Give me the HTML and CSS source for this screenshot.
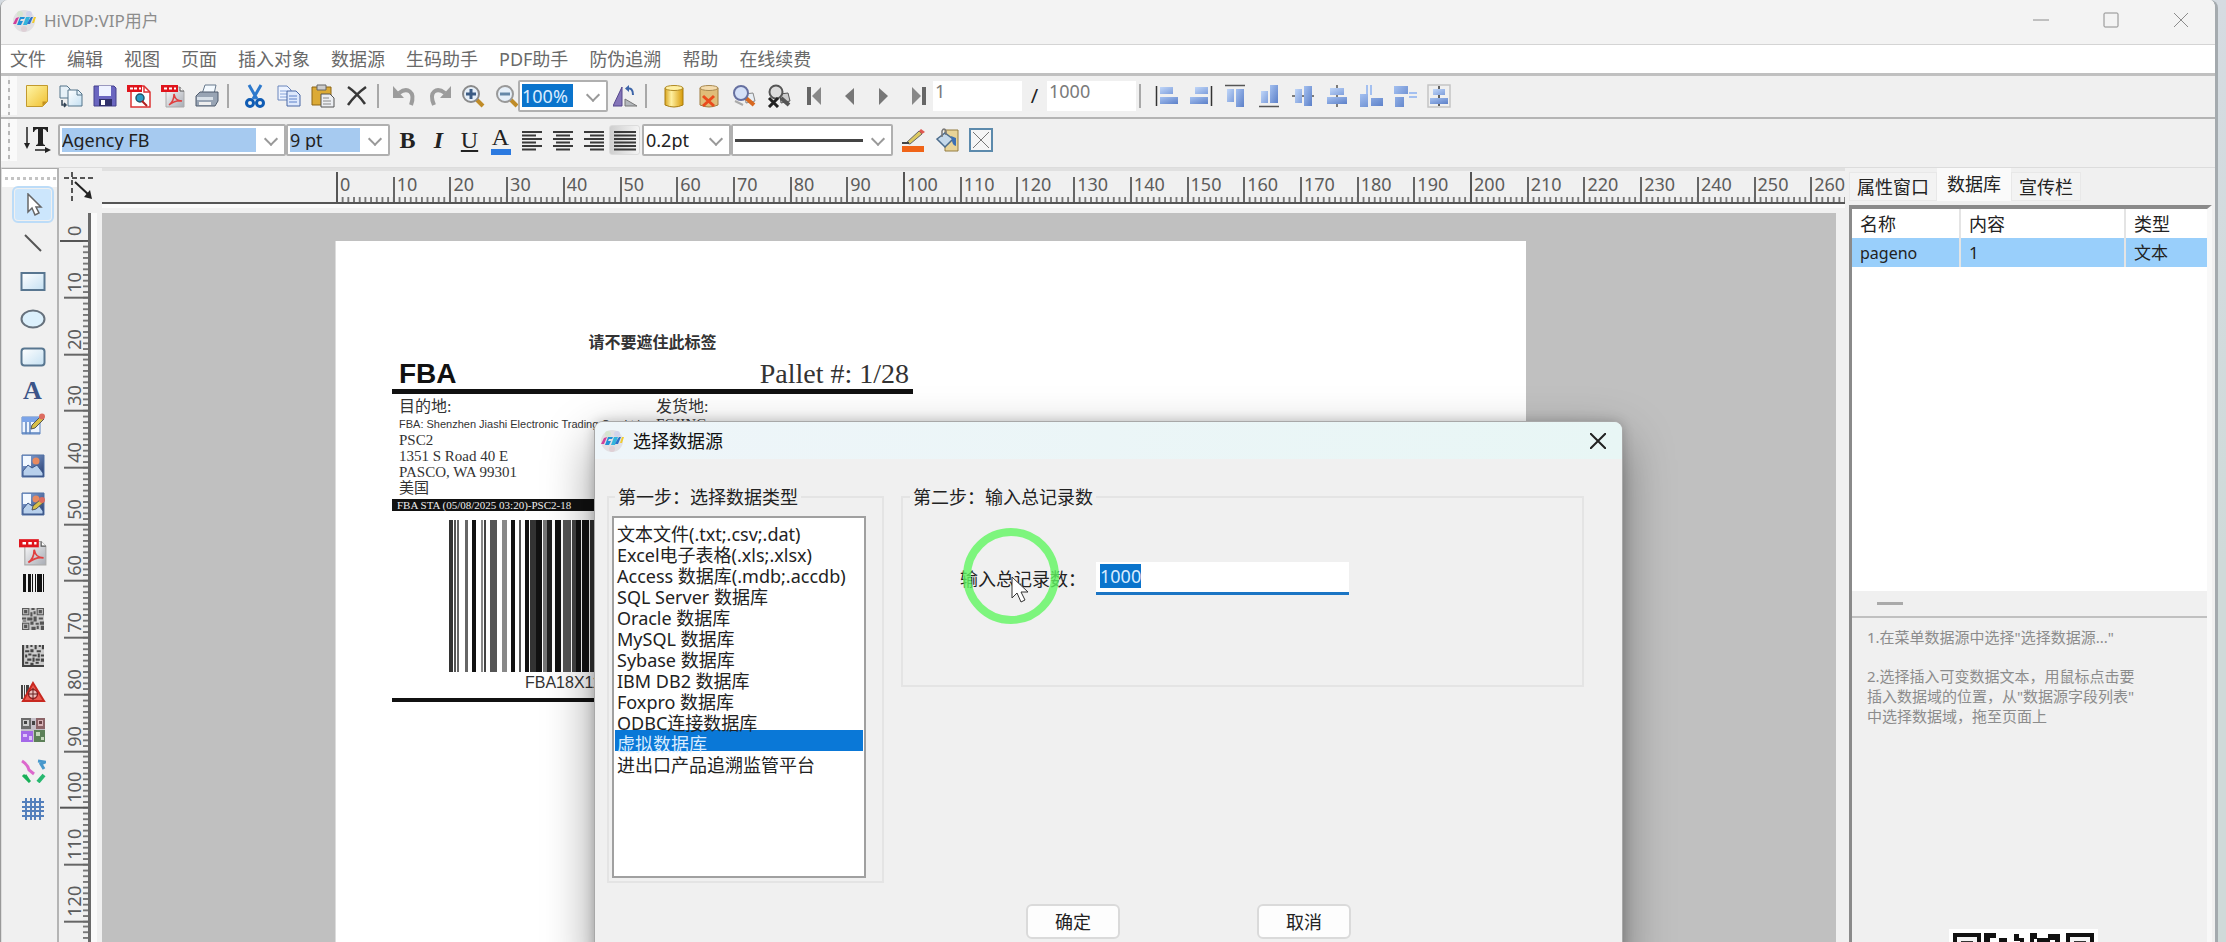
FILE: index.html
```
<!DOCTYPE html>
<html lang="zh-CN">
<head>
    <meta charset="UTF-8">
    <meta name="viewport" content="width=device-width, initial-scale=1.0">
    <title>HiVDP:VIP用户</title>
    <link rel="stylesheet" href="styles.css">
</head>
<body>
    <svg class="defs" aria-hidden="true">
        <defs>
            <linearGradient id="g-yellow" x1="0" y1="0" x2="1" y2="1"><stop offset="0" stop-color="#fff6a8"/><stop offset="1" stop-color="#f0c030"/></linearGradient>
            <linearGradient id="g-gold"><stop offset="0" stop-color="#d9a520"/><stop offset=".35" stop-color="#fff0a0"/><stop offset="1" stop-color="#d79a08"/></linearGradient>
            <linearGradient id="g-blue" x1="0" y1="0" x2="1" y2="1"><stop offset="0" stop-color="#c0d6f8"/><stop offset="1" stop-color="#7f9fdc"/></linearGradient>
            <linearGradient id="g-deep" x1="0" y1="0" x2="1" y2="1"><stop offset="0" stop-color="#a4c0f0"/><stop offset="1" stop-color="#5c80c8"/></linearGradient>
            <linearGradient id="g-sky" x1="0" y1="0" x2="1" y2="1"><stop offset="0" stop-color="#ffffff"/><stop offset="1" stop-color="#c4e0f2"/></linearGradient>
            <linearGradient id="g-navy" x1="0" y1="0" x2="1" y2="1"><stop offset="0" stop-color="#8fb0e4"/><stop offset="1" stop-color="#25396b"/></linearGradient>
            <linearGradient id="g-grey" x1="0" y1="0" x2="1" y2="1"><stop offset="0" stop-color="#fdfdfd"/><stop offset="1" stop-color="#a8acb4"/></linearGradient>
        </defs>
        <symbol id="i-logo" viewBox="0 0 24 24">
            <circle cx="12" cy="12" r="11" fill="#e2e0e3"/><circle cx="8" cy="5" r="3" fill="#d6e4d0"/><circle cx="17" cy="5" r="3" fill="#d4d4ea"/><circle cx="12" cy="20" r="3" fill="#dfd0d6"/>
            <path d="M1 15l3-6 3-1-3 7z" fill="#d0409a"/><path d="M5 16l3-8h5l-1 2H9l-1 2h3l-2 4z" fill="#2090d8"/><path d="M11 16l3-8h4l-3 8z" fill="#35b4dc"/><path d="M15 15l2-4 2-3h2l-3 7z" fill="#2d70c8"/><path d="M20 14l2-6h2l-2 6z" fill="#f0cc30"/>
        </symbol>
        <symbol id="i-note" viewBox="0 0 24 24"><path d="M1.500 1.500h21v16l-5 5h-16z" fill="url(#g-yellow)" stroke="#c29a2e"/><path d="M22 17.500h-4.500V22z" fill="#c29020"/></symbol>
        <symbol id="i-docs" viewBox="0 0 24 24"><path d="M1 2h7l3 3v9H1z" fill="#e6f0f7" stroke="#54748a"/><path d="M9 6h10l4 4v12H9z" fill="url(#g-sky)" stroke="#54748a"/><path d="M18 6v5h5" fill="none" stroke="#54748a"/><path d="M3 16v5h4M5 19l2 2-2 2" fill="none" stroke="#345" stroke-width="1.500"/></symbol>
        <symbol id="i-save" viewBox="0 0 24 24"><path d="M1 2h20l2 2v18H1z" fill="#6a66c0" stroke="#44408c"/><path d="M6 2h12v10H6z" fill="#eef2ff"/><path d="M6 15h13v7H6z" fill="#30306a"/><path d="M8 16h4v5H8z" fill="#fff"/></symbol>
        <symbol id="i-pdf" viewBox="0 0 24 24"><path d="M5 3h14l4 4v16H5z" fill="url(#g-grey)" stroke="#aaa"/><path d="M19 3v4h4" fill="#fff" stroke="#555"/><path d="M0 1h17v7H0z" fill="#e0141c"/><path d="M3 4.500h3M8 4.500h3M13 4.500h2" stroke="#fff" stroke-width="2"/><path d="M8 21c4-3 5-7 5-11 1 5 3 7 8 7-5-1-9 1-13 4z" fill="none" stroke="#e04040" stroke-width="1.500"/></symbol>
        <symbol id="i-pdfsearch" viewBox="0 0 24 24"><path d="M4 2h13l6 6v15H4z" fill="#fff" stroke="#d33" stroke-width="1.500"/><path d="M17 2v6h6" fill="none" stroke="#d33" stroke-width="1.500"/><path d="M0 1h15v7H0z" fill="#e0141c"/><path d="M3 4.500h3M7 4.500h3M12 4.500h2" stroke="#fff" stroke-width="2"/><circle cx="13" cy="14" r="4" fill="#2b9dc4" stroke="#24566a" stroke-width="1.500"/><path d="M15 17l5 5" stroke="#b02020" stroke-width="2"/></symbol>
        <symbol id="i-print" viewBox="0 0 24 24"><path d="M7 10L10 1h11l-2 9z" fill="#f4faff" stroke="#66788c"/><path d="M1 12l4-4h18v9l-3 5H1z" fill="#98a4b4" stroke="#4f5b6d"/><path d="M2 13h16v3H2z" fill="#d8e0e8"/><path d="M4 18h12v3H4z" fill="#eee"/></symbol>
        <symbol id="i-cut" viewBox="0 0 24 24"><path d="M6 1l8 14M18 1l-8 14" stroke="#2d79cc" stroke-width="3"/><circle cx="7" cy="19" r="3.500" fill="none" stroke="#0f5cb4" stroke-width="3"/><circle cx="17" cy="19" r="3.500" fill="none" stroke="#0f5cb4" stroke-width="3"/></symbol>
        <symbol id="i-copy" viewBox="0 0 24 24"><path d="M1 2h9l4 4v10H1z" fill="#edf3ff" stroke="#6a86bc"/><path d="M3 7h7M3 10h7M3 13h7" stroke="#86a4da"/><path d="M10 7h9l4 4v11H10z" fill="#dde8fc" stroke="#4866a4"/><path d="M12 12h8M12 15h8M12 18h8" stroke="#5c80c8"/></symbol>
        <symbol id="i-paste" viewBox="0 0 24 24"><path d="M1 3h19v18H1z" fill="#dcaa35" stroke="#8c6414"/><path d="M6 1h9v5H6z" fill="#ccc" stroke="#666"/><path d="M10 10h9l4 4v9H10z" fill="#eceef2" stroke="#555"/><path d="M12 14h6M12 17h8M12 20h8" stroke="#888"/></symbol>
        <symbol id="i-delete" viewBox="0 0 24 24"><path d="M3 3c6 4 12 10 17 17M21 3C14 8 8 14 3 21" fill="none" stroke="#383838" stroke-width="2.500"/></symbol>
        <symbol id="i-undo" viewBox="0 0 24 24"><path d="M6 9c8-6 17-2 12 12" fill="none" stroke="#9c9c9c" stroke-width="4"/><path d="M0 2v12h11z" fill="#9c9c9c"/></symbol>
        <symbol id="i-redo" viewBox="0 0 24 24"><path d="M18 9C10 3 1 7 7 21" fill="none" stroke="#9c9c9c" stroke-width="4"/><path d="M24 2v12H13z" fill="#9c9c9c"/></symbol>
        <symbol id="i-zoomin" viewBox="0 0 24 24"><path d="M15 15l7 7" stroke="#c08c28" stroke-width="4"/><circle cx="10" cy="10" r="8" fill="#e6eff8" stroke="#8a8a8a" stroke-width="2"/><path d="M10 5v10M5 10h10" stroke="#3c5c84" stroke-width="3"/></symbol>
        <symbol id="i-zoomout" viewBox="0 0 24 24"><path d="M15 15l7 7" stroke="#c08c28" stroke-width="4"/><circle cx="10" cy="10" r="8" fill="#e6eff8" stroke="#999" stroke-width="2"/><path d="M5 10h10" stroke="#6688a8" stroke-width="3"/></symbol>
        <symbol id="i-flip" viewBox="0 0 24 24"><path d="M9 3v19H0z" fill="#8474b8" stroke="#55468c"/><path d="M12 15l12 7H12z" fill="#b4b8bc" stroke="#777"/><path d="M14 5q6-2 6 6" fill="none" stroke="#3c64a8" stroke-width="2"/><path d="M16 1v7l-4-3.500z" fill="#3c64a8"/></symbol>
        <symbol id="i-db" viewBox="0 0 24 24"><path d="M3 4v17q9 4 18 0V4z" fill="url(#g-gold)" stroke="#a87c10"/><ellipse cx="12" cy="4" rx="9" ry="2.500" fill="#fff0a4" stroke="#b08a24"/></symbol>
        <symbol id="i-dbdel" viewBox="0 0 24 24"><path d="M3 4v17q9 4 18 0V4z" fill="#e0bc78" stroke="#a07c40"/><ellipse cx="12" cy="4" rx="9" ry="2.500" fill="#f4dcae" stroke="#a88850"/><path d="M6 12l11 10M17 12L6 22" stroke="#ea4a1c" stroke-width="3"/></symbol>
        <symbol id="i-find" viewBox="0 0 24 24"><path d="M13 10l8-1 2 8-9 2z" fill="#e8eef4" stroke="#888"/><path d="M14 14l8 7" stroke="#d86820" stroke-width="4"/><circle cx="9" cy="9" r="7" fill="#d4e0f8" stroke="#6670a0" stroke-width="2"/><path d="M3 17l8 4" stroke="#aaa" stroke-width="2"/></symbol>
        <symbol id="i-findx" viewBox="0 0 24 24"><path d="M13 10l8-1 2 8-9 2z" fill="#ccc" stroke="#555"/><path d="M14 14l8 7" stroke="#555" stroke-width="4"/><circle cx="9" cy="8" r="6.500" fill="#ddd" stroke="#555" stroke-width="2"/><path d="M2 14l9 9M11 14l-9 9" stroke="#222" stroke-width="3"/></symbol>
        <symbol id="i-first" viewBox="0 0 24 24"><path d="M5 3h4v18H5z" fill="#666"/><path d="M19 3v18l-9-9z" fill="#888"/></symbol>
        <symbol id="i-prev" viewBox="0 0 24 24"><path d="M17 4v17l-9-9z" fill="#777"/></symbol>
        <symbol id="i-next" viewBox="0 0 24 24"><path d="M7 4v17l9-9z" fill="#777"/></symbol>
        <symbol id="i-last" viewBox="0 0 24 24"><path d="M15 3h4v18h-4z" fill="#666"/><path d="M5 3v18l9-9z" fill="#888"/></symbol>
        <symbol id="i-alignl" viewBox="0 0 24 24"><path d="M1.500 2v20" stroke="#333" stroke-width="1.500"/><path d="M5 3h13v7H5z" fill="url(#g-blue)"/><path d="M5 13h18v7H5z" fill="url(#g-deep)"/></symbol>
        <symbol id="i-alignr" viewBox="0 0 24 24"><path d="M22.500 2v20" stroke="#333" stroke-width="1.500"/><path d="M6 3h13v7H6z" fill="url(#g-blue)"/><path d="M1 13h18v7H1z" fill="url(#g-deep)"/></symbol>
        <symbol id="i-alignt" viewBox="0 0 24 24"><path d="M2 1.500h20" stroke="#555" stroke-width="1.500"/><path d="M4 5h7v13H4z" fill="url(#g-blue)"/><path d="M13 5h8v18h-8z" fill="url(#g-deep)"/></symbol>
        <symbol id="i-alignb" viewBox="0 0 24 24"><path d="M2 22.500h20" stroke="#555" stroke-width="1.500"/><path d="M4 7h7v12H4z" fill="url(#g-blue)"/><path d="M13 1h8v18h-8z" fill="url(#g-deep)"/></symbol>
        <symbol id="i-alignm" viewBox="0 0 24 24"><path d="M1 12h22" stroke="#555" stroke-width="1.500"/><path d="M4 5h7v14H4z" fill="url(#g-blue)"/><path d="M13 2h8v20h-8z" fill="url(#g-deep)"/></symbol>
        <symbol id="i-alignc" viewBox="0 0 24 24"><path d="M12 1v22" stroke="#555" stroke-width="1.500"/><path d="M5 4h14v7H5z" fill="url(#g-blue)"/><path d="M2 13h20v7H2z" fill="url(#g-deep)"/></symbol>
        <symbol id="i-samew" viewBox="0 0 24 24"><path d="M7 1h2v10H7zM11 1h2v10h-2z" fill="#a4c0f0"/><path d="M1 10h8v13H1zM12 14h12v8H12z" fill="url(#g-deep)"/></symbol>
        <symbol id="i-sameh" viewBox="0 0 24 24"><path d="M16 8h8v2h-8zM16 12h8v2h-8z" fill="#a4c0f0"/><path d="M1 2h14v8H1zM2 13h9v10H2z" fill="url(#g-deep)"/></symbol>
        <symbol id="i-center" viewBox="0 0 24 24"><path d="M1 1h22v22H1z" fill="#f0f0f0" stroke="#c4c4c4" stroke-width="1.500"/><path d="M12 2v20" stroke="#333" stroke-width="1.500"/><path d="M6 5h12v6H6z" fill="url(#g-blue)"/><path d="M3 14h18v6H3z" fill="url(#g-deep)"/></symbol>
        <symbol id="i-textdir" viewBox="0 0 28 28"><path d="M4 1v18" stroke="#222" stroke-width="1.500"/><path d="M1 17h6l-3 6z" fill="#222"/><path d="M10 1h15v5h-1q-1-3-4-3v14q0 2 2 2v1h-9v-1q2 0 2-2V3q-3 0-4 3h-1z" fill="#222"/><path d="M12 24h12" stroke="#222" stroke-width="1.500"/><path d="M22 21v6l6-3z" fill="#222"/></symbol>
        <symbol id="i-left" viewBox="0 0 24 24"><path d="M2 4h20M2 7.500h14M2 11h20M2 14.500h14M2 18h20M2 21.500h14" stroke="#3a3a3a" stroke-width="2"/></symbol>
        <symbol id="i-mid" viewBox="0 0 24 24"><path d="M2 4h20M5 7.500h14M2 11h20M5 14.500h14M2 18h20M5 21.500h14" stroke="#3a3a3a" stroke-width="2"/></symbol>
        <symbol id="i-right" viewBox="0 0 24 24"><path d="M2 4h20M8 7.500h14M2 11h20M8 14.500h14M2 18h20M8 21.500h14" stroke="#3a3a3a" stroke-width="2"/></symbol>
        <symbol id="i-full" viewBox="0 0 24 24"><path d="M1 4h22M1 7.500h22M1 11h22M1 14.500h22M1 18h22M1 21.500h22" stroke="#3a3a3a" stroke-width="2"/></symbol>
        <symbol id="i-pen" viewBox="0 0 24 24"><path d="M5 15L18 3l3 3L9 16z" fill="#dcc860" stroke="#666"/><path d="M18 3l2-2 4 3-3 2z" fill="#e05850"/><path d="M1 15h7" stroke="#444" stroke-width="2"/><path d="M1 18h22v6H1z" fill="#f06418"/></symbol>
        <symbol id="i-bucket" viewBox="0 0 24 24"><path d="M10 2h13v21H10z" fill="#e8d498" stroke="#947c40"/><path d="M2 11l8-6 8 6-8 8z" fill="#c4d8ea" stroke="#4c6c8c" stroke-width="1.500"/><path d="M7 9V3q2-4 4 0v4" fill="none" stroke="#777" stroke-width="1.500"/><path d="M16 8l5 2v8q-4-1-4-6z" fill="#3c70b4"/></symbol>
        <symbol id="i-boxx" viewBox="0 0 24 24"><path d="M1 1h22v22H1z" fill="#f5f5f5" stroke="#5c8aac" stroke-width="2"/><path d="M4 4l16 16M20 4L4 20" stroke="#777"/></symbol>
        <symbol id="i-arrow" viewBox="0 0 24 24"><path d="M7 1v18l4-4 3 7 4-2-3-6h5z" fill="#fff" stroke="#666" stroke-width="1.500"/></symbol>
        <symbol id="i-line" viewBox="0 0 24 24"><path d="M4 4l16 16" stroke="#555" stroke-width="2"/></symbol>
        <symbol id="i-rect" viewBox="0 0 26 24"><path d="M1.500 4h23v17h-23z" fill="url(#g-sky)" stroke="#587690" stroke-width="2"/></symbol>
        <symbol id="i-ellipse" viewBox="0 0 26 24"><ellipse cx="13" cy="12" rx="11.500" ry="8.500" fill="#dcf0fc" stroke="#66717c" stroke-width="2"/></symbol>
        <symbol id="i-rrect" viewBox="0 0 26 24"><rect x="1.500" y="3.500" width="23" height="17" rx="3" fill="url(#g-sky)" stroke="#587690" stroke-width="2"/></symbol>
        <symbol id="i-tableedit" viewBox="0 0 24 24"><path d="M1 4h18v17H1z" fill="#eef5ff" stroke="#5c84c0"/><path d="M1 4h18v5H1z" fill="#7ba4e8"/><path d="M5 9v12M9 9v12M1 20h18" stroke="#5c84c0" stroke-width="1.500"/><path d="M10 16l1-4 9-9 3 3-9 9z" fill="#d8c048" stroke="#555"/><circle cx="21" cy="3.500" r="3" fill="#dc6c60"/></symbol>
        <symbol id="i-picture" viewBox="0 0 24 24"><path d="M1 1h22v22H1z" fill="url(#g-navy)" stroke="#5070a4"/><path d="M2 2h8v10H2z" fill="#f2f8ff"/><path d="M2 17l5-6 4 3 5-3 6 8v3H2z" fill="#b8d0ec" stroke="#3c588c"/><circle cx="15" cy="7" r="3.500" fill="#e88a60"/></symbol>
        <symbol id="i-barcode" viewBox="0 0 24 24"><path d="M2 3h3v18H2zM7 3h3v18H7zM11 3h1v18h-1zM14 3h1v18h-1zM16 3h5v18h-5zM22 3h1v18h-1z" fill="#111"/></symbol>
        <symbol id="i-qr" viewBox="0 0 21 21"><path d="M0 0h21v21H0z" fill="#c8c8c8"/><path d="M0 0h7v7H0zM14 0h7v7h-7zM0 14h7v7H0z" fill="#5a5a5a"/><path d="M1 1h5v5H1zM15 1h5v5h-5zM1 15h5v5H1z" fill="#bbb"/><path d="M2 2h3v3H2zM16 2h3v3h-3zM2 16h3v3H2zM9 0h3v2H9zM8 4h2v4H8zM11 3h2v3h-2zM0 9h4v2H0zM5 9h5v3H5zM11 8h3v5h-3zM16 9h4v2h-4zM1 12h3v1H1zM8 13h3v3H8zM13 14h3v2h-3zM17 13h4v3h-4zM9 18h4v3H9zM14 17h2v3h-2zM18 17h3v4h-3z" fill="#555"/></symbol>
        <symbol id="i-dm" viewBox="0 0 21 21"><path d="M0 0h21v21H0z" fill="#ccc"/><path d="M0 0h2v21H0zM2 19h19v2H2zM4 0h2v3H4zM8 0h2v2H8zM12 0h2v4h-2zM16 0h2v2h-2zM19 0h2v4h-2zM3 5h4v2H3zM8 4h3v3H8zM14 5h4v2h-4zM3 9h2v3H3zM6 8h3v2H6zM10 9h4v2h-4zM15 8h2v4h-2zM18 9h3v2h-3zM5 13h4v2H5zM10 12h2v4h-2zM13 13h4v2h-4zM18 13h3v3h-3zM3 16h3v2H3zM8 17h3v2H8zM13 16h3v2h-3z" fill="#444"/></symbol>
        <symbol id="i-trace" viewBox="0 0 26 24"><path d="M1 4h2v14H1zM4 4h1v14H4zM6 4h3v12H6z" fill="#444"/><path d="M13 2l11 18H3z" fill="#e85a50" stroke="#c82820" stroke-width="2"/><circle cx="13" cy="13" r="4.500" fill="#eac0bc" stroke="#922" stroke-width="1.500"/><path d="M13 7v12M8 13h10" stroke="#622"/></symbol>
        <symbol id="i-qrcolor" viewBox="0 0 24 24"><path d="M0 0h24v24H0z" fill="#c4c0c8"/><path d="M0 0h10v11H0z" fill="#6c6c6c"/><path d="M2 2h6v6H2z" fill="#ccc"/><path d="M3 3h3v3H3zM11 3h3v4h-3z" fill="#444"/><path d="M15 0h9v11h-9z" fill="#8c6468"/><path d="M17 2h5v6h-5z" fill="#d8b4b8"/><path d="M18 3h3v3h-3z" fill="#6c4448"/><path d="M0 13h12v11H0z" fill="#a468e8"/><path d="M2 16h4v3H2zM8 18h3v4H8z" fill="#ddc4fa"/><path d="M13 12h11v12H13z" fill="#5c8058"/><path d="M15 14h4v4h-4zM20 19h3v3h-3z" fill="#c4d8bc"/></symbol>
        <symbol id="i-marks" viewBox="0 0 26 24"><path d="M2 2q6 4 7 9l5 4" fill="none" stroke="#dc68cc" stroke-width="3"/><path d="M18 2l7 1-4 2 3 5" fill="none" stroke="#4898cc" stroke-width="3"/><path d="M3 16l7 7M5 16l4 6" stroke="#18b058" stroke-width="3"/><path d="M24 16l-6 7" stroke="#28b870" stroke-width="4"/></symbol>
        <symbol id="i-grid" viewBox="0 0 24 24"><path d="M5 1v22M10 1v22M14 1v22M19 1v22M1 5h22M1 10h22M1 14h22M1 19h22" stroke="#5480bc" stroke-width="2"/></symbol>
        <symbol id="i-origin" viewBox="0 0 32 32"><path d="M0 7h32M8 1v31" stroke="#222" stroke-width="1.500" stroke-dasharray="5 3"/><path d="M11 11l15 14" stroke="#222" stroke-width="2"/><path d="M28 28l-8-2 6-7z" fill="#222"/></symbol>
    </svg>

    <div class="window">
        <header class="titlebar">
            <svg class="logo"><use href="#i-logo"/></svg>
            <h1>HiVDP:VIP用户</h1>
            <div class="window-buttons">
                <button aria-label="最小化"><svg viewBox="0 0 16 16"><path d="M0 8h16"/></svg></button>
                <button aria-label="最大化"><svg viewBox="0 0 16 16"><rect x="1" y="1" width="14" height="14" rx="1"/></svg></button>
                <button aria-label="关闭"><svg viewBox="0 0 16 16"><path d="M1 1l14 14M15 1L1 15"/></svg></button>
            </div>
        </header>

        <nav class="menubar">
            <button>文件</button><button>编辑</button><button>视图</button><button>页面</button><button>插入对象</button><button>数据源</button><button>生码助手</button><button>PDF助手</button><button>防伪追溯</button><button>帮助</button><button>在线续费</button>
        </nav>

        <div class="toolbar toolbar-main">
            <span class="grip"></span>
            <div class="group">
                <button aria-label="新建"><svg><use href="#i-note"/></svg></button>
                <button aria-label="打开"><svg><use href="#i-docs"/></svg></button>
                <button aria-label="保存"><svg><use href="#i-save"/></svg></button>
                <button aria-label="预览PDF"><svg><use href="#i-pdfsearch"/></svg></button>
                <button aria-label="导出PDF"><svg><use href="#i-pdf"/></svg></button>
                <button aria-label="打印"><svg><use href="#i-print"/></svg></button>
            </div>
            <span class="sep"></span>
            <div class="group">
                <button aria-label="剪切"><svg><use href="#i-cut"/></svg></button>
                <button aria-label="复制"><svg><use href="#i-copy"/></svg></button>
                <button aria-label="粘贴"><svg><use href="#i-paste"/></svg></button>
                <button aria-label="删除"><svg><use href="#i-delete"/></svg></button>
            </div>
            <span class="sep"></span>
            <div class="group group-zoom">
                <button aria-label="撤销"><svg><use href="#i-undo"/></svg></button>
                <button aria-label="重做"><svg><use href="#i-redo"/></svg></button>
                <button aria-label="放大"><svg><use href="#i-zoomin"/></svg></button>
                <button aria-label="缩小"><svg><use href="#i-zoomout"/></svg></button>
            </div>
            <span class="combo combo-zoom"><select aria-label="缩放"><option>100%</option></select></span>
            <div class="group">
                <button aria-label="翻转"><svg><use href="#i-flip"/></svg></button>
            </div>
            <span class="sep"></span>
            <div class="group group-wide">
                <button aria-label="选择数据源"><svg><use href="#i-db"/></svg></button>
                <button aria-label="移除数据源"><svg><use href="#i-dbdel"/></svg></button>
                <button aria-label="查看数据"><svg><use href="#i-find"/></svg></button>
                <button aria-label="取消查看"><svg><use href="#i-findx"/></svg></button>
                <button aria-label="第一条"><svg><use href="#i-first"/></svg></button>
                <button aria-label="上一条"><svg><use href="#i-prev"/></svg></button>
                <button aria-label="下一条"><svg><use href="#i-next"/></svg></button>
                <button aria-label="最后一条"><svg><use href="#i-last"/></svg></button>
            </div>
            <input class="record" aria-label="当前记录" value="1">
            <span class="slash">/</span>
            <input class="record" aria-label="总记录" value="1000">
            <span class="sep"></span>
            <div class="group">
                <button aria-label="左对齐"><svg><use href="#i-alignl"/></svg></button>
                <button aria-label="右对齐"><svg><use href="#i-alignr"/></svg></button>
                <button aria-label="顶对齐"><svg><use href="#i-alignt"/></svg></button>
                <button aria-label="底对齐"><svg><use href="#i-alignb"/></svg></button>
                <button aria-label="垂直居中"><svg><use href="#i-alignm"/></svg></button>
                <button aria-label="水平居中"><svg><use href="#i-alignc"/></svg></button>
                <button aria-label="等宽"><svg><use href="#i-samew"/></svg></button>
                <button aria-label="等高"><svg><use href="#i-sameh"/></svg></button>
                <button aria-label="页面居中"><svg><use href="#i-center"/></svg></button>
            </div>
        </div>

        <div class="toolbar toolbar-format">
            <span class="grip"></span>
            <button class="textdir" aria-label="文字方向"><svg><use href="#i-textdir"/></svg></button>
            <span class="combo combo-font"><select aria-label="字体"><option>Agency FB</option></select></span>
            <span class="combo combo-size"><select aria-label="字号"><option>9 pt</option></select></span>
            <div class="group group-format">
                <button class="letter bold">B</button>
                <button class="letter italic">I</button>
                <button class="letter underline">U</button>
                <button class="letter color">A</button>
                <button aria-label="居左"><svg><use href="#i-left"/></svg></button>
                <button aria-label="居中"><svg><use href="#i-mid"/></svg></button>
                <button aria-label="居右"><svg><use href="#i-right"/></svg></button>
                <button class="pressed" aria-label="两端对齐"><svg><use href="#i-full"/></svg></button>
            </div>
            <span class="combo combo-pt"><select aria-label="线宽"><option>0.2pt</option></select></span>
            <span class="combo combo-line"><select aria-label="线型"><option></option></select></span>
            <div class="group group-fill">
                <button aria-label="线条颜色"><svg><use href="#i-pen"/></svg></button>
                <button aria-label="填充颜色"><svg><use href="#i-bucket"/></svg></button>
                <button aria-label="无填充"><svg><use href="#i-boxx"/></svg></button>
            </div>
        </div>

        <main class="main">
            <aside class="tools">
                <span class="tools-grip"></span>
                <div class="tools-group shapes">
                    <button class="active" aria-label="选择"><svg><use href="#i-arrow"/></svg></button>
                    <button aria-label="直线"><svg><use href="#i-line"/></svg></button>
                    <button aria-label="矩形"><svg><use href="#i-rect"/></svg></button>
                    <button aria-label="椭圆"><svg><use href="#i-ellipse"/></svg></button>
                    <button aria-label="圆角矩形"><svg><use href="#i-rrect"/></svg></button>
                </div>
                <div class="tools-group texts">
                    <button class="tool-text">A</button>
                    <button aria-label="可变文本"><svg><use href="#i-tableedit"/></svg></button>
                </div>
                <div class="tools-group pictures">
                    <button aria-label="图片"><svg><use href="#i-picture"/></svg></button>
                    <button aria-label="可变图片"><svg viewBox="0 0 24 24"><use href="#i-picture"/><path d="M11 18l1-4 8-7 3 3-8 7z" fill="#d8c048" stroke="#555"/><circle cx="21" cy="8" r="3" fill="#dc6c60"/></svg></button>
                </div>
                <div class="tools-group files">
                    <button aria-label="PDF"><svg class="big"><use href="#i-pdf"/></svg></button>
                    <button aria-label="条形码"><svg><use href="#i-barcode"/></svg></button>
                </div>
                <div class="tools-group codes">
                    <button aria-label="二维码"><svg class="small"><use href="#i-qr"/></svg></button>
                    <button aria-label="DM码"><svg class="small"><use href="#i-dm"/></svg></button>
                    <button aria-label="溯源码"><svg><use href="#i-trace"/></svg></button>
                    <button aria-label="彩色码"><svg><use href="#i-qrcolor"/></svg></button>
                </div>
                <div class="tools-group marks">
                    <button aria-label="标记"><svg><use href="#i-marks"/></svg></button>
                    <button aria-label="网格"><svg><use href="#i-grid"/></svg></button>
                </div>
            </aside>

            <section class="workspace">
                <div class="corner"><svg><use href="#i-origin"/></svg></div>
                <div class="ruler-h"><div class="scale" id="scale-h"></div></div>
                <div class="ruler-v"><div class="scale" id="scale-v"></div></div>
                <div class="canvas">
                    <div class="sheet">
                        <div class="label">
                            <p class="notice">请不要遮住此标签</p>
                            <div class="label-head"><b>FBA</b><span>Pallet #: 1/28</span></div>
                            <div class="label-body">
                                <div class="to">
                                    <p>目的地:</p>
                                    <p class="narrow">FBA: Shenzhen Jiashi Electronic Trading Co., Ltd</p>
                                    <p>PSC2</p>
                                    <p>1351 S Road 40 E</p>
                                    <p>PASCO, WA 99301</p>
                                    <p>美国</p>
                                </div>
                                <div class="from">
                                    <p>发货地:</p>
                                    <p>FCJING</p>
                                </div>
                            </div>
                            <p class="strip">FBA STA (05/08/2025 03:20)-PSC2-18</p>
                            <svg class="bars" id="bars" viewBox="0 0 146 152"></svg>
                            <p class="bars-text">FBA18X11</p>
                        </div>
                    </div>
                </div>
            </section>

            <aside class="panel">
                <div class="tabs">
                    <button>属性窗口</button>
                    <button class="current">数据库</button>
                    <button>宣传栏</button>
                </div>
                <div class="panel-body">
                    <div class="fields">
                        <table>
                            <thead><tr><th>名称</th><th>内容</th><th>类型</th></tr></thead>
                            <tbody><tr><td>pageno</td><td>1</td><td>文本</td></tr></tbody>
                        </table>
                    </div>
                    <div class="splitter"><span></span></div>
                    <div class="help">
                        <p>1.在菜单数据源中选择"选择数据源..."</p>
                        <p>2.选择插入可变数据文本，用鼠标点击要<br>插入数据域的位置，从"数据源字段列表"<br>中选择数据域，拖至页面上</p>
                    </div>
                    <div class="qr">
                        <svg viewBox="0 0 149 149">
                            <path fill="#111" d="M4 4h28v28H4zM35 4h12v5h-6v8h-6zM50 9h8v4h4v4H50zM65 5h5v4h5v5h6v4H71v-6h-6zM81 4h7v5h11V5h12v13h-5v-7h-5v3H88v-4h-3v8h-4zM117 4h28v28h-28zM4 117h28v28H4zM40 40h30v20H40zM80 50h24v30H80zM44 90h30v24H44z"/>
                            <path fill="#f4f4f4" d="M8 8h20v20H8zM121 8h20v20h-20zM8 121h20v20H8z"/>
                            <path fill="#333" d="M12 12h12v12H12zM125 12h12v12h-12zM12 125h12v12H12z"/>
                        </svg>
                    </div>
                </div>
            </aside>
        </main>
    </div>

    <div class="dialog" role="dialog" aria-labelledby="dialog-title">
        <div class="dialog-title">
            <svg class="logo"><use href="#i-logo"/></svg>
            <h2 id="dialog-title">选择数据源</h2>
            <button aria-label="关闭"><svg viewBox="0 0 16 16"><path d="M0 0l16 16M16 0L0 16"/></svg></button>
        </div>
        <div class="dialog-body">
            <fieldset class="step-type">
                <legend>第一步：选择数据类型</legend>
                <select size="12" aria-label="数据类型">
                    <option>文本文件(.txt;.csv;.dat)</option>
                    <option>Excel电子表格(.xls;.xlsx)</option>
                    <option>Access 数据库(.mdb;.accdb)</option>
                    <option>SQL Server 数据库</option>
                    <option>Oracle 数据库</option>
                    <option>MySQL 数据库</option>
                    <option>Sybase 数据库</option>
                    <option>IBM DB2 数据库</option>
                    <option>Foxpro 数据库</option>
                    <option>ODBC连接数据库</option>
                    <option selected>虚拟数据库</option>
                    <option>进出口产品追溯监管平台</option>
                </select>
            </fieldset>
            <fieldset class="step-count">
                <legend>第二步：输入总记录数</legend>
                <div class="count-row">
                    <label for="count">输入总记录数：</label>
                    <input id="count" value="1000">
                </div>
            </fieldset>
        </div>
        <div class="dialog-actions">
            <button>确定</button>
            <button>取消</button>
        </div>
        <div class="pointer">
            <svg viewBox="0 0 20 28"><path d="M1 1v21l5-5 4 9 4-2-4-8h7z"/></svg>
        </div>
    </div>

    <script src="script.js"></script>
</body>
</html>
```

FILE: styles.css
```
/* General Styles */
* {
    box-sizing: border-box;
}

body {
    margin: 0;
    height: 100vh;
    overflow: hidden;
    position: relative;
    background: linear-gradient(#d5dbe1, #cfdad9 60%);
    font-family: "Noto Sans", "Noto Sans CJK SC", sans-serif;
    font-size: 18px;
    line-height: 20px;
    color: #222;
}

p, h1, h2 {
    margin: 0;
    font-weight: normal;
}

button, input, select {
    font: inherit;
    color: inherit;
    border: none;
    background: none;
    padding: 0;
    margin: 0;
    outline: none;
}

.defs {
    position: absolute;
    width: 0;
    height: 0;
}

.window {
    height: 100%;
    margin-right: 8px;
    display: flex;
    flex-direction: column;
    background: #f0f0f0;
    border-left: 1px solid #999;
    border-right: 3px solid #a4aaae;
    border-radius: 8px 8px 0 0;
    overflow: hidden;
}

/* Title bar */
.titlebar {
    flex: none;
    display: flex;
    align-items: center;
    height: 45px;
    padding: 0 13px 3px 11px;
    background: #f3f3f3;
    border-bottom: 1px solid #d4d4d4;
}

.logo {
    width: 24px;
    height: 24px;
}

.titlebar h1 {
    margin-left: 8px;
    font-size: 17px;
    color: #8c8c8c;
}

.window-buttons {
    display: flex;
    margin-left: auto;
}

.window-buttons button {
    width: 70px;
    height: 40px;
}

.window-buttons button:last-child {
    width: 42px;
    margin-left: 14px;
}

.window-buttons svg,
.dialog-title button svg {
    width: 16px;
    height: 16px;
    fill: none;
    stroke: #8c8c8c;
}

/* Menu */
.menubar {
    flex: none;
    display: flex;
    height: 31px;
    background: #fff;
    border-bottom: 3px solid #c0c0c0;
}

.menubar button {
    padding: 0 10px 0 11px;
    color: #6a6a6a;
    white-space: nowrap;
}

.menubar button:first-child {
    padding-left: 9px;
}

/* Toolbars */
.toolbar {
    flex: none;
    display: flex;
    align-items: center;
    height: 43px;
    border-bottom: 2px solid #b4b4b4;
}

.toolbar-main {
    padding-bottom: 2px;
}

.toolbar-format {
    height: 49px;
    padding-bottom: 6px;
    border-bottom: 1px solid #dcdcdc;
}

.grip {
    align-self: stretch;
    width: 16px;
    margin-right: 3px;
    background: linear-gradient(#f4f4f4 50%, #b8b8b8 50%) 7px 0 / 2px 8px repeat-y #fafafa;
}

.group {
    display: flex;
}

.toolbar button {
    display: flex;
    align-items: center;
    justify-content: center;
    width: 34px;
    height: 30px;
}

.toolbar .group-zoom {
    margin-right: -6px;
}

.toolbar .group-wide {
    margin-right: -3px;
}

.toolbar .group-wide button {
    width: 35px;
}

.toolbar button svg {
    width: 24px;
    height: 24px;
}

.sep {
    width: 2px;
    height: 24px;
    margin: 0 9px 0 3px;
    background: #a8a8a8;
}

.combo {
    position: relative;
    display: flex;
    height: 32px;
    background: #fff;
    border: 2px solid #b0b0b0;
    border-radius: 2px;
}

.combo::after {
    content: "";
    position: absolute;
    right: 8px;
    top: 8px;
    width: 8px;
    height: 8px;
    border: solid #999;
    border-width: 0 2px 2px 0;
    transform: rotate(45deg);
    pointer-events: none;
}

.combo select {
    appearance: none;
    width: 100%;
    padding: 0 2px;
    background-repeat: no-repeat;
    background-position: 2px 2px;
}

.combo-zoom {
    width: 90px;
}

.combo-zoom select {
    color: #d8ecff;
    background-image: linear-gradient(#0a74cc, #0a74cc);
    background-size: 51px 23px;
}

.combo-font {
    width: 228px;
}

.combo-font select {
    background-image: linear-gradient(#a6caf0, #a6caf0);
    background-size: 194px 24px;
}

.combo-size {
    width: 104px;
}

.combo-size select {
    background-image: linear-gradient(#a6caf0, #a6caf0);
    background-size: 70px 24px;
}

.combo-pt {
    width: 89px;
}

.combo-line {
    width: 162px;
}

.combo-line select {
    background-image: linear-gradient(#444, #444);
    background-size: 128px 3px;
    background-position: 2px 13px;
}

.record {
    width: 89px;
    height: 30px;
    padding: 0 2px 10px;
    background: #fff;
    color: #7a7a7a;
}

.slash {
    width: 25px;
    text-align: center;
    font-size: 20px;
}

.toolbar .group-fill {
    margin-left: 3px;
}

.toolbar .textdir {
    width: 34px;
    margin-right: 4px;
}

.toolbar .textdir svg {
    width: 28px;
    height: 28px;
}

.toolbar .group-format {
    margin: 0 2px;
}

.toolbar .group-format button {
    width: 31px;
}

.toolbar .pressed {
    background: linear-gradient(90deg, #cfcfcf, #f4f4f4);
    border: 1px solid #dcdcdc;
    border-radius: 3px;
}

.letter {
    font: 24px/24px "Liberation Serif", serif;
}

.bold {
    font-weight: bold;
}

.italic {
    font-weight: bold;
    font-style: italic;
}

.underline {
    text-decoration: underline;
}

.toolbar .color {
    background: linear-gradient(#2c7ae0, #2c7ae0) center bottom / 20px 6px no-repeat;
    padding-bottom: 6px;
}

/* Main area */
.main {
    flex: 1;
    display: flex;
    min-height: 0;
}

.tools {
    flex: none;
    width: 58px;
    border-top: 1px solid #aaa;
    border-right: 2px solid #b4b4b4;
    border-left: 1px solid #ddd;
    display: flex;
    flex-direction: column;
}

.tools-grip {
    height: 18px;
    background: linear-gradient(90deg, #c4c4c4 50%, #fff 50%) 3px 8px / 6px 3px repeat-x #fff;
}

.tools-group {
    display: flex;
    flex-direction: column;
    align-items: center;
    padding-left: 6px;
}

.tools-group button {
    display: flex;
    align-items: center;
    justify-content: center;
    width: 36px;
    height: 31px;
}

.tools-group svg {
    width: 26px;
    height: 24px;
}

.tools-group .small {
    width: 22px;
    height: 22px;
}

.tools-group .big {
    width: 28px;
    height: 28px;
}

.shapes {
    gap: 7px;
    margin-top: 2px;
}

.tools-group .active {
    background: #cce6fc;
    outline: 2px solid #bcdcf8;
    outline-offset: 1px;
    border-radius: 3px;
}

.texts {
    gap: 3px;
    margin-top: 3px;
}

.tool-text {
    font: bold 26px/26px "Liberation Serif", serif;
    color: #3c5488;
}

.pictures {
    gap: 7px;
    margin-top: 10px;
}

.files {
    margin-top: 17px;
}

.codes {
    gap: 6px;
    margin-top: 5px;
}

.marks {
    gap: 7px;
    margin-top: 10px;
}

/* Workspace with rulers */
.workspace {
    flex: 1;
    min-width: 0;
    display: grid;
    grid-template-columns: 43px 1fr;
    grid-template-rows: 45px 1fr;
}

.corner {
    padding: 3px 0 0 5px;
}

.corner svg {
    width: 32px;
    height: 32px;
}

.ruler-h {
    height: 36px;
    margin-right: 4px;
    overflow: hidden;
    border-top: 3px solid #e0e0e0;
    border-bottom: 2px solid #555;
    box-shadow: 0 4px #fafafa;
}

.ruler-h .scale {
    display: flex;
    width: 1531px;
    height: 100%;
    margin-left: 234px;
}

.ruler-h .scale span {
    flex: 1;
    min-width: 0;
    padding: 3px 0 0 4px;
    color: #5c5c5c;
    background:
        linear-gradient(#666, #666) 0 100% / 2px 25px no-repeat,
        linear-gradient(90deg, #777 2px, transparent 2px) 0 100% / 10% 5px repeat-x;
}

.ruler-h .scale .major {
    background:
        linear-gradient(#555, #555) 0 100% / 2px 30px no-repeat,
        linear-gradient(90deg, #777 2px, transparent 2px) 0 100% / 10% 5px repeat-x;
}

.ruler-v {
    min-height: 0;
    overflow: hidden;
    width: 31px;
    margin-left: 1px;
    border-right: 3px solid #6a6a6a;
    box-shadow: 6px 0 #fafafa;
}

.ruler-v .scale {
    display: flex;
    flex-direction: column;
    height: 766px;
}

.ruler-v .scale span {
    flex: 1;
    min-height: 0;
    padding: 6px 4px 0;
    writing-mode: vertical-rl;
    transform: rotate(180deg);
    color: #5c5c5c;
    background:
        linear-gradient(#666, #666) 0 0 / 24px 2px no-repeat,
        linear-gradient(#777 2px, transparent 2px) 0 0 / 5px 10% repeat-y;
}

.ruler-v .scale .major {
    background:
        linear-gradient(#555, #555) 0 0 / 30px 2px no-repeat,
        linear-gradient(#777 2px, transparent 2px) 0 0 / 5px 10% repeat-y;
}

.ruler-v .scale .start {
    flex: none;
    height: 29px;
    background: linear-gradient(#555, #555) 0 0 / 30px 2px no-repeat;
}

.canvas {
    min-height: 0;
    margin-right: 13px;
    overflow: hidden;
    background: #c0c0c0;
    padding: 28px 0 0 233px;
}

.sheet {
    width: 1191px;
    height: 1684px;
    background: #fff;
    border-left: 1px solid #ddd;
    padding: 92px 56px;
}

/* Shipping label */
.label {
    width: 521px;
    font-family: "Liberation Serif", "Noto Sans CJK SC", serif;
    font-size: 15px;
    line-height: 16px;
    color: #333;
    border-bottom: 4px solid #111;
}

.notice {
    text-align: center;
    font-size: 16px;
    line-height: 20px;
    font-weight: bold;
}

.label-head {
    display: flex;
    justify-content: space-between;
    align-items: center;
    height: 41px;
    padding: 6px 4px 0 7px;
    border-bottom: 5px solid #111;
    font-size: 28px;
    line-height: 30px;
}

.label-head b {
    font-family: "Liberation Sans", sans-serif;
    color: #111;
}

.label-body {
    display: flex;
    padding: 5px 0 0 7px;
}

.to {
    width: 257px;
    white-space: nowrap;
}

.to .narrow {
    font-family: "Liberation Sans Narrow", "Liberation Sans", sans-serif;
    font-size: 11px;
}

.from p:first-child,
.to p:first-child {
    font-size: 16px;
}

.label-body p:nth-child(2) {
    padding-top: 1px;
}

.strip {
    margin-top: 3px;
    padding-left: 5px;
    background: #111;
    color: #eee;
    font-size: 11px;
    line-height: 12px;
}

.bars {
    display: block;
    width: 146px;
    height: 152px;
    margin: 9px 0 0 56px;
}

.bars-text {
    padding: 3px 0 7px 133px;
    font-family: "Liberation Sans", sans-serif;
    font-size: 16px;
}

/* Right panel */
.panel {
    flex: none;
    width: 366px;
    display: flex;
    flex-direction: column;
}

.tabs {
    display: flex;
    align-items: flex-end;
    height: 37px;
    padding-bottom: 4px;
}

.tabs button {
    height: 29px;
    padding: 0 7px;
    background: #f3f3f3;
    border: 1px solid #e8e8e8;
}

.tabs .current {
    height: 33px;
    padding: 0 10px 2px;
    background: #fafafa;
    border: none;
}

.panel-body {
    flex: 1;
    min-height: 0;
    margin-right: 3px;
    display: flex;
    flex-direction: column;
    border-top: 4px solid #8a8a8a;
    border-left: 3px solid #8a8a8a;
    border-right: 5px solid #f8f8f8;
}

.fields {
    flex: none;
    height: 382px;
    background: #fff;
}

.fields table {
    width: 100%;
    table-layout: fixed;
    border-collapse: collapse;
}

.fields th,
.fields td {
    height: 29px;
    padding: 0 0 0 8px;
    border-right: 2px solid #e4e4e4;
    text-align: left;
    font-weight: normal;
}

.fields td {
    background: #99cffb;
    font-size: 17px;
}

.fields td:first-child {
    font-size: 16px;
}

.fields th:nth-child(1) {
    width: 108px;
}

.fields th:nth-child(2) {
    width: 165px;
}

.fields th:last-child,
.fields td:last-child {
    border-right: none;
}

.splitter {
    flex: none;
    height: 27px;
    padding: 11px 25px;
    border-bottom: 2px solid #c0c0c0;
}

.splitter span {
    display: block;
    width: 26px;
    height: 3px;
    background: #aaa;
}

.help {
    padding: 9px 15px 0;
    font-size: 15px;
    color: #8c8c8c;
}

.help p {
    margin-bottom: 19px;
    white-space: nowrap;
}

.qr {
    flex: none;
    width: 149px;
    height: 149px;
    margin: auto 0 -136px 97px;
    background: #fff;
}

/* Dialog */
.dialog {
    position: absolute;
    left: 594px;
    top: 421px;
    width: 1029px;
    background: #f0f0f0;
    border: 1px solid #a8a8a8;
    border-radius: 9px;
    box-shadow: 0 20px 50px rgba(0, 0, 0, 0.4), 0 0 12px rgba(0, 0, 0, 0.2);
}

.dialog-title {
    display: flex;
    align-items: center;
    height: 37px;
    padding: 0 16px 0 5px;
    border-radius: 8px 8px 0 0;
    background: linear-gradient(90deg, #eef5f9, #e8f6f5);
}

.dialog-title h2 {
    margin-left: 9px;
    font-size: 18px;
    color: #111;
}

.dialog-title button {
    display: flex;
    margin-left: auto;
}

.dialog-title button svg {
    stroke: #222;
    stroke-width: 2px;
}

.dialog-body {
    display: flex;
    align-items: flex-start;
    gap: 17px;
    padding: 28px 38px 0 12px;
}

fieldset {
    margin: 0;
    padding: 0;
    border: 2px solid #e4e4e4;
}

legend {
    padding: 0 3px;
    margin-left: 7px;
}

.step-type {
    width: 277px;
    height: 396px;
    padding: 9px 0 0 3px;
}

.step-type legend {
    margin-left: 3px;
}

.step-type select {
    display: block;
    width: 254px;
    height: 362px;
    padding: 2px 1px;
    background: #fff;
    border: 2px solid #a0a0a0;
    border-radius: 0;
    overflow: hidden;
}

.step-type option {
    height: 21px;
    min-height: 21px;
    padding: 0 2px;
    line-height: 18px;
}

.step-type option:checked {
    background: linear-gradient(#0a78d7, #0a78d7);
    color: #d8ecff;
}

.step-count {
    flex: 1;
    height: 200px;
}

.count-row {
    display: flex;
    align-items: center;
    padding: 55px 0 0 57px;
}

.count-row label {
    width: 136px;
    white-space: nowrap;
}

.count-row input {
    width: 253px;
    height: 33px;
    padding: 0 4px 2px;
    background: #fff;
    border-bottom: 3px solid #1b75c4;
}

.count-row input::selection {
    background: #0a74cc;
    color: #d8ecff;
}

.dialog-actions {
    display: flex;
    gap: 137px;
    padding: 21px 0 26px 431px;
}

.dialog-actions button {
    width: 94px;
    height: 35px;
    background: #fdfdfd;
    border: 2px solid #dadada;
    border-radius: 6px;
}

/* Click highlight */
.pointer {
    position: absolute;
    left: 368px;
    top: 106px;
    width: 96px;
    height: 96px;
    border: 8px solid rgba(96, 246, 96, 0.8);
    border-radius: 50%;
    pointer-events: none;
}

.pointer svg {
    position: absolute;
    left: 40px;
    top: 40px;
    width: 20px;
    height: 28px;
    fill: #fff;
    stroke: #333;
}
```

FILE: script.js
```
document.addEventListener('DOMContentLoaded', () => {
    const scaleH = document.querySelector('#scale-h');
    const scaleV = document.querySelector('#scale-v');
    const bars = document.querySelector('#bars');
    const count = document.querySelector('#count');

    // Ruler marks, one span for each 10 mm
    function addMark(scale, value) {
        const mark = document.createElement('span');
        mark.textContent = value;
        mark.classList.toggle('major', value !== '' && value % 100 === 0);
        scale.appendChild(mark);
        return mark;
    }

    for (let mm = 0; mm <= 260; mm += 10) {
        addMark(scaleH, mm);
    }

    addMark(scaleV, 0).classList.add('start');
    for (let mm = 10; mm <= 120; mm += 10) {
        addMark(scaleV, mm);
    }
    addMark(scaleV, '');

    // Barcode: x, width, colour
    const stripes = [
        [1, 4, '#333'], [6, 2, '#555'], [9, 2, '#666'], [17, 3, '#666'], [24, 4, '#111'],
        [33, 2, '#888'], [36, 2, '#444'], [42, 7, '#555'], [54, 5, '#888'], [63, 4, '#111'],
        [71, 2, '#555'], [77, 4, '#111'], [82, 6, '#333'], [88, 6, '#111'], [95, 4, '#777'],
        [99, 5, '#222'], [107, 6, '#111'], [115, 8, '#555'], [124, 4, '#444'], [128, 5, '#111'],
        [134, 7, '#111'], [142, 4, '#333']
    ];
    bars.innerHTML = stripes.map(([x, w, color]) => `<rect x="${x}" width="${w}" height="152" fill="${color}"/>`).join('');

    count.focus();
    count.select();
});
```
